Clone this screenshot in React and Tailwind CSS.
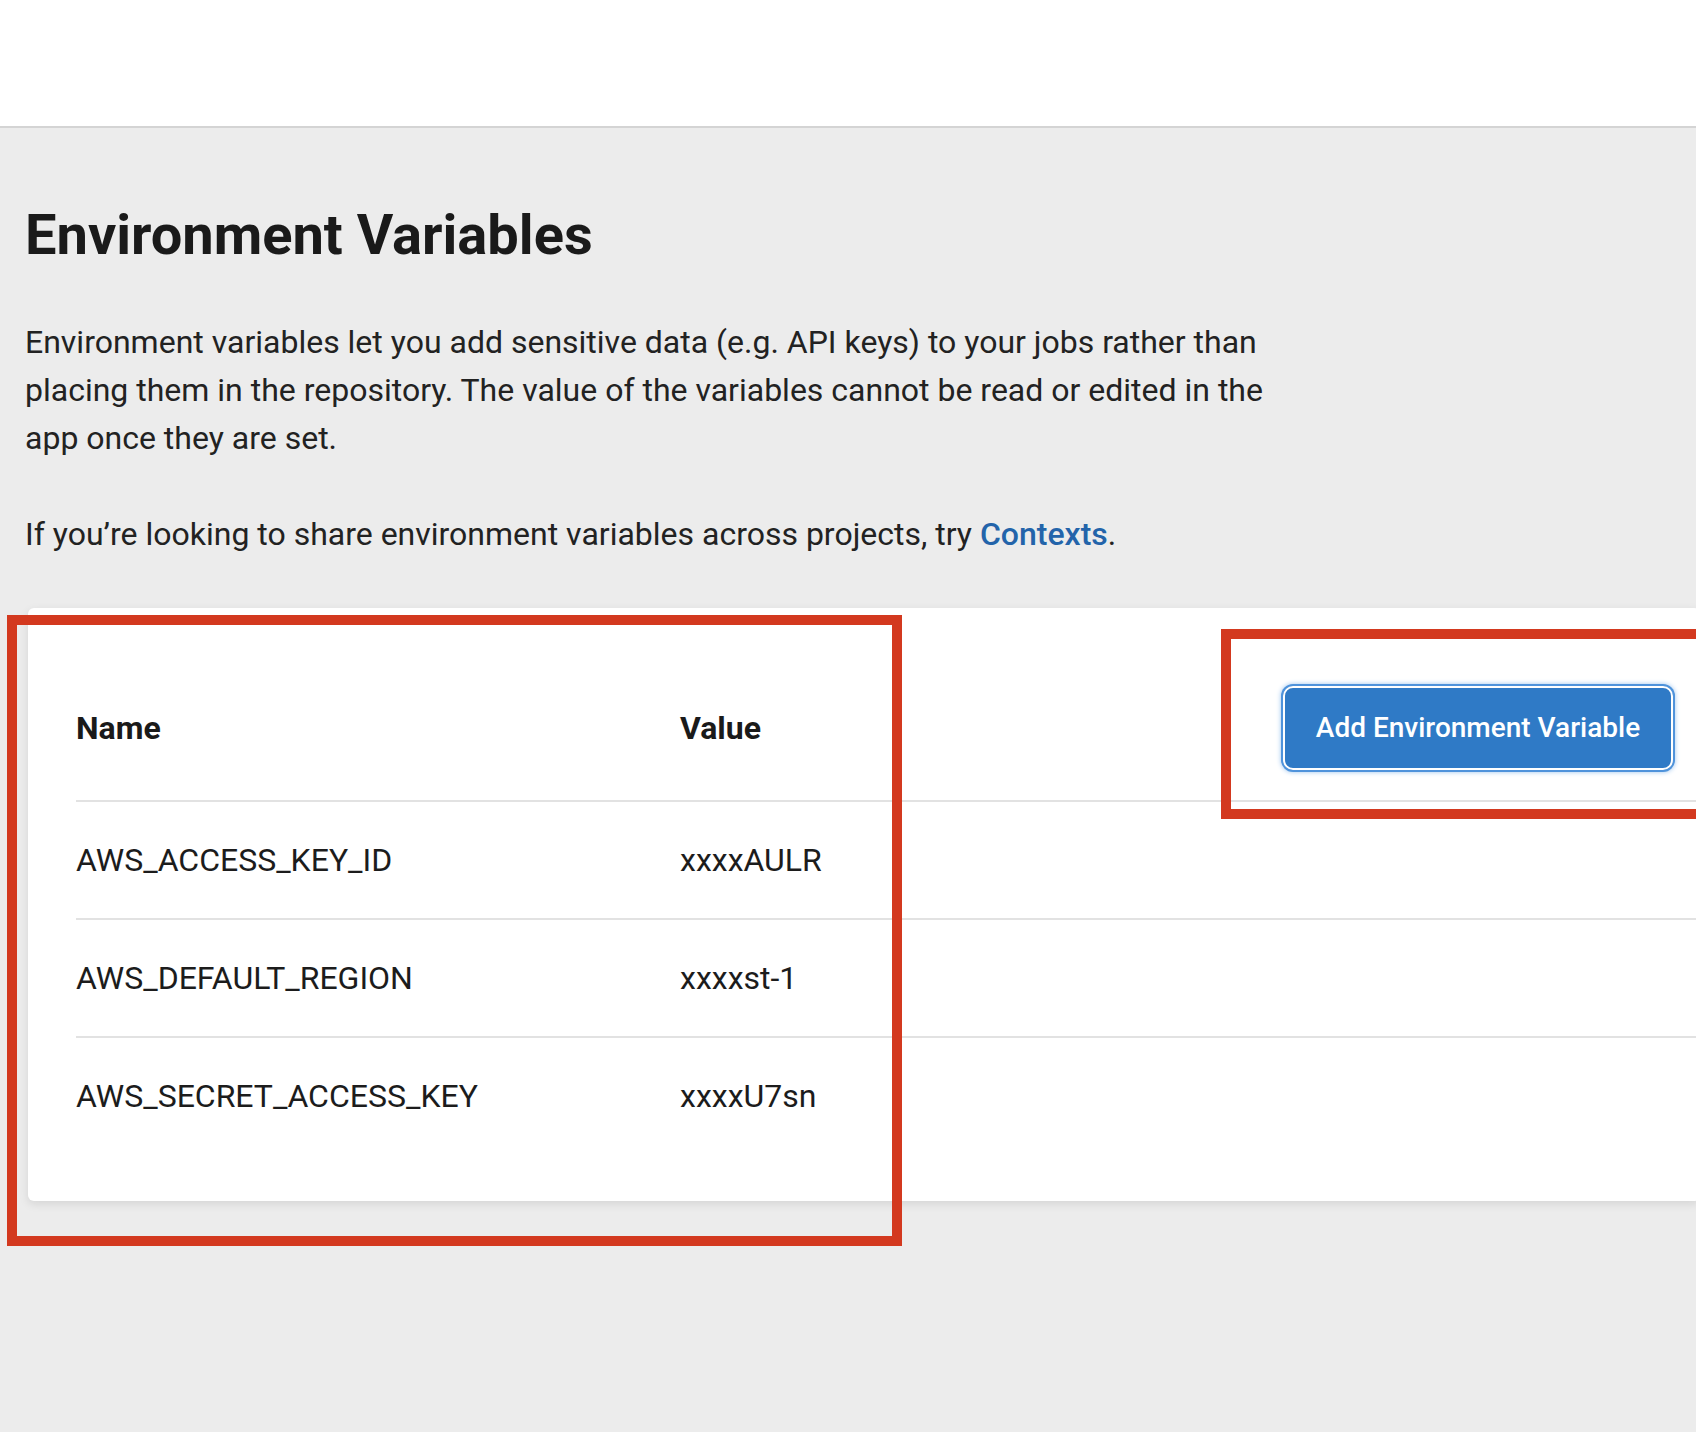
import React from "react";

const variables = [
  { name: "AWS_ACCESS_KEY_ID", value: "xxxxAULR" },
  { name: "AWS_DEFAULT_REGION", value: "xxxxst-1" },
  { name: "AWS_SECRET_ACCESS_KEY", value: "xxxxU7sn" },
];

const App = () => {
  return (
    <div
      className="relative w-[1696px] h-[1432px] overflow-hidden bg-[#ececec] text-[#1c1c1c]"
      style={{ fontFamily: "Roboto, 'Noto Sans', sans-serif" }}
    >
      {/* Top bar */}
      <div className="h-[128px] bg-white border-b-2 border-[#d4d4d4]" />

      <main className="pl-[25px]">
        <h1 className="pt-[74px] text-[56px] leading-[66px] font-bold text-[#1a1a1a]">
          Environment Variables
        </h1>

        <p className="mt-[50px] max-w-[1260px] text-[32px] leading-[48px] text-[#222]">
          Environment variables let you add sensitive data (e.g. API keys) to your jobs rather than
          placing them in the repository. The value of the variables cannot be read or edited in the
          app once they are set.
        </p>

        <p className="mt-[48px] text-[32px] leading-[48px] text-[#222]">
          If you’re looking to share environment variables across projects, try{" "}
          <a href="#" className="font-medium text-[#2364aa]">
            Contexts
          </a>
          .
        </p>

        {/* Variables card */}
        <div className="mt-[50px] ml-[3px] w-[1672px] bg-white rounded-[6px] shadow-[0_3px_10px_rgba(0,0,0,0.10)] pt-[48px] pb-[47px] pl-[48px]">
          <div className="h-[144px] flex items-center text-[32px] font-bold text-[#1a1a1a]">
            <div className="w-[604px]">Name</div>
            <div className="flex-1">Value</div>
            <button className="mr-[27px] w-[390px] h-[84px] rounded-[10px] bg-[#2f7ac6] text-white text-[28px] font-medium shadow-[inset_0_0_0_2px_#ffffff,0_0_0_2px_#4f93db,0_0_5px_2px_#9cc4ee]">
              Add Environment Variable
            </button>
          </div>

          {variables.map((v) => (
            <div
              key={v.name}
              className="h-[118px] flex items-center border-t-2 border-[#e2e2e2] text-[32px] text-[#1c1c1c]"
            >
              <div className="w-[604px]">{v.name}</div>
              <div>{v.value}</div>
            </div>
          ))}
        </div>
      </main>

      {/* Annotation boxes */}
      <div className="absolute left-[7px] top-[615px] w-[895px] h-[631px] border-[10px] border-[#d3391f]" />
      <div className="absolute left-[1221px] top-[629px] w-[500px] h-[190px] border-[10px] border-[#d3391f]" />
    </div>
  );
};

export default App;
